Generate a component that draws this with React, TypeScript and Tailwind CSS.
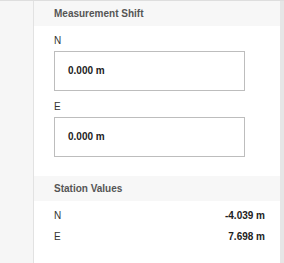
export default function App() {
  const stationValues = [
    { label: "N", value: "-4.039 m" },
    { label: "E", value: "7.698 m" },
  ];

  return (
    <div className="flex w-[284px] h-[263px] border-t border-[#dedede] bg-white font-['Liberation_Sans',Arial,sans-serif] text-[10px] leading-[12px]">
      <div className="w-[34px] shrink-0 bg-[#f6f6f6] border-r border-[#e2e2e2]" />

      <div className="w-[246px] shrink-0 flex flex-col">
        <div className="h-[25px] shrink-0 flex items-center pl-[20px] bg-[#f7f7f7] font-bold text-[#555]">
          Measurement Shift
        </div>

        <div className="flex flex-col pl-[20px] pt-[9px]">
          <label className="text-[#333]">N</label>
          <div className="mt-[4px] w-[191px] h-[40px] flex items-center pl-[13px] border border-[#bdbdbd] font-bold text-[#222]">
            0.000 m
          </div>

          <label className="mt-[10px] text-[#333]">E</label>
          <div className="mt-[4px] w-[191px] h-[40px] flex items-center pl-[13px] border border-[#bdbdbd] font-bold text-[#222]">
            0.000 m
          </div>
        </div>

        <div className="mt-[19px] h-[25px] shrink-0 flex items-center pl-[20px] bg-[#f7f7f7] font-bold text-[#555]">
          Station Values
        </div>

        <div className="flex flex-col pt-[4px] pl-[20px] pr-[15px]">
          {stationValues.map((row) => (
            <div key={row.label} className="flex justify-between items-center h-[21px]">
              <span className="text-[#333]">{row.label}</span>
              <span className="font-bold text-[#222]">{row.value}</span>
            </div>
          ))}
        </div>
      </div>

      <div className="w-[4px] shrink-0 bg-[#e6e6e6]" />
    </div>
  );
}
